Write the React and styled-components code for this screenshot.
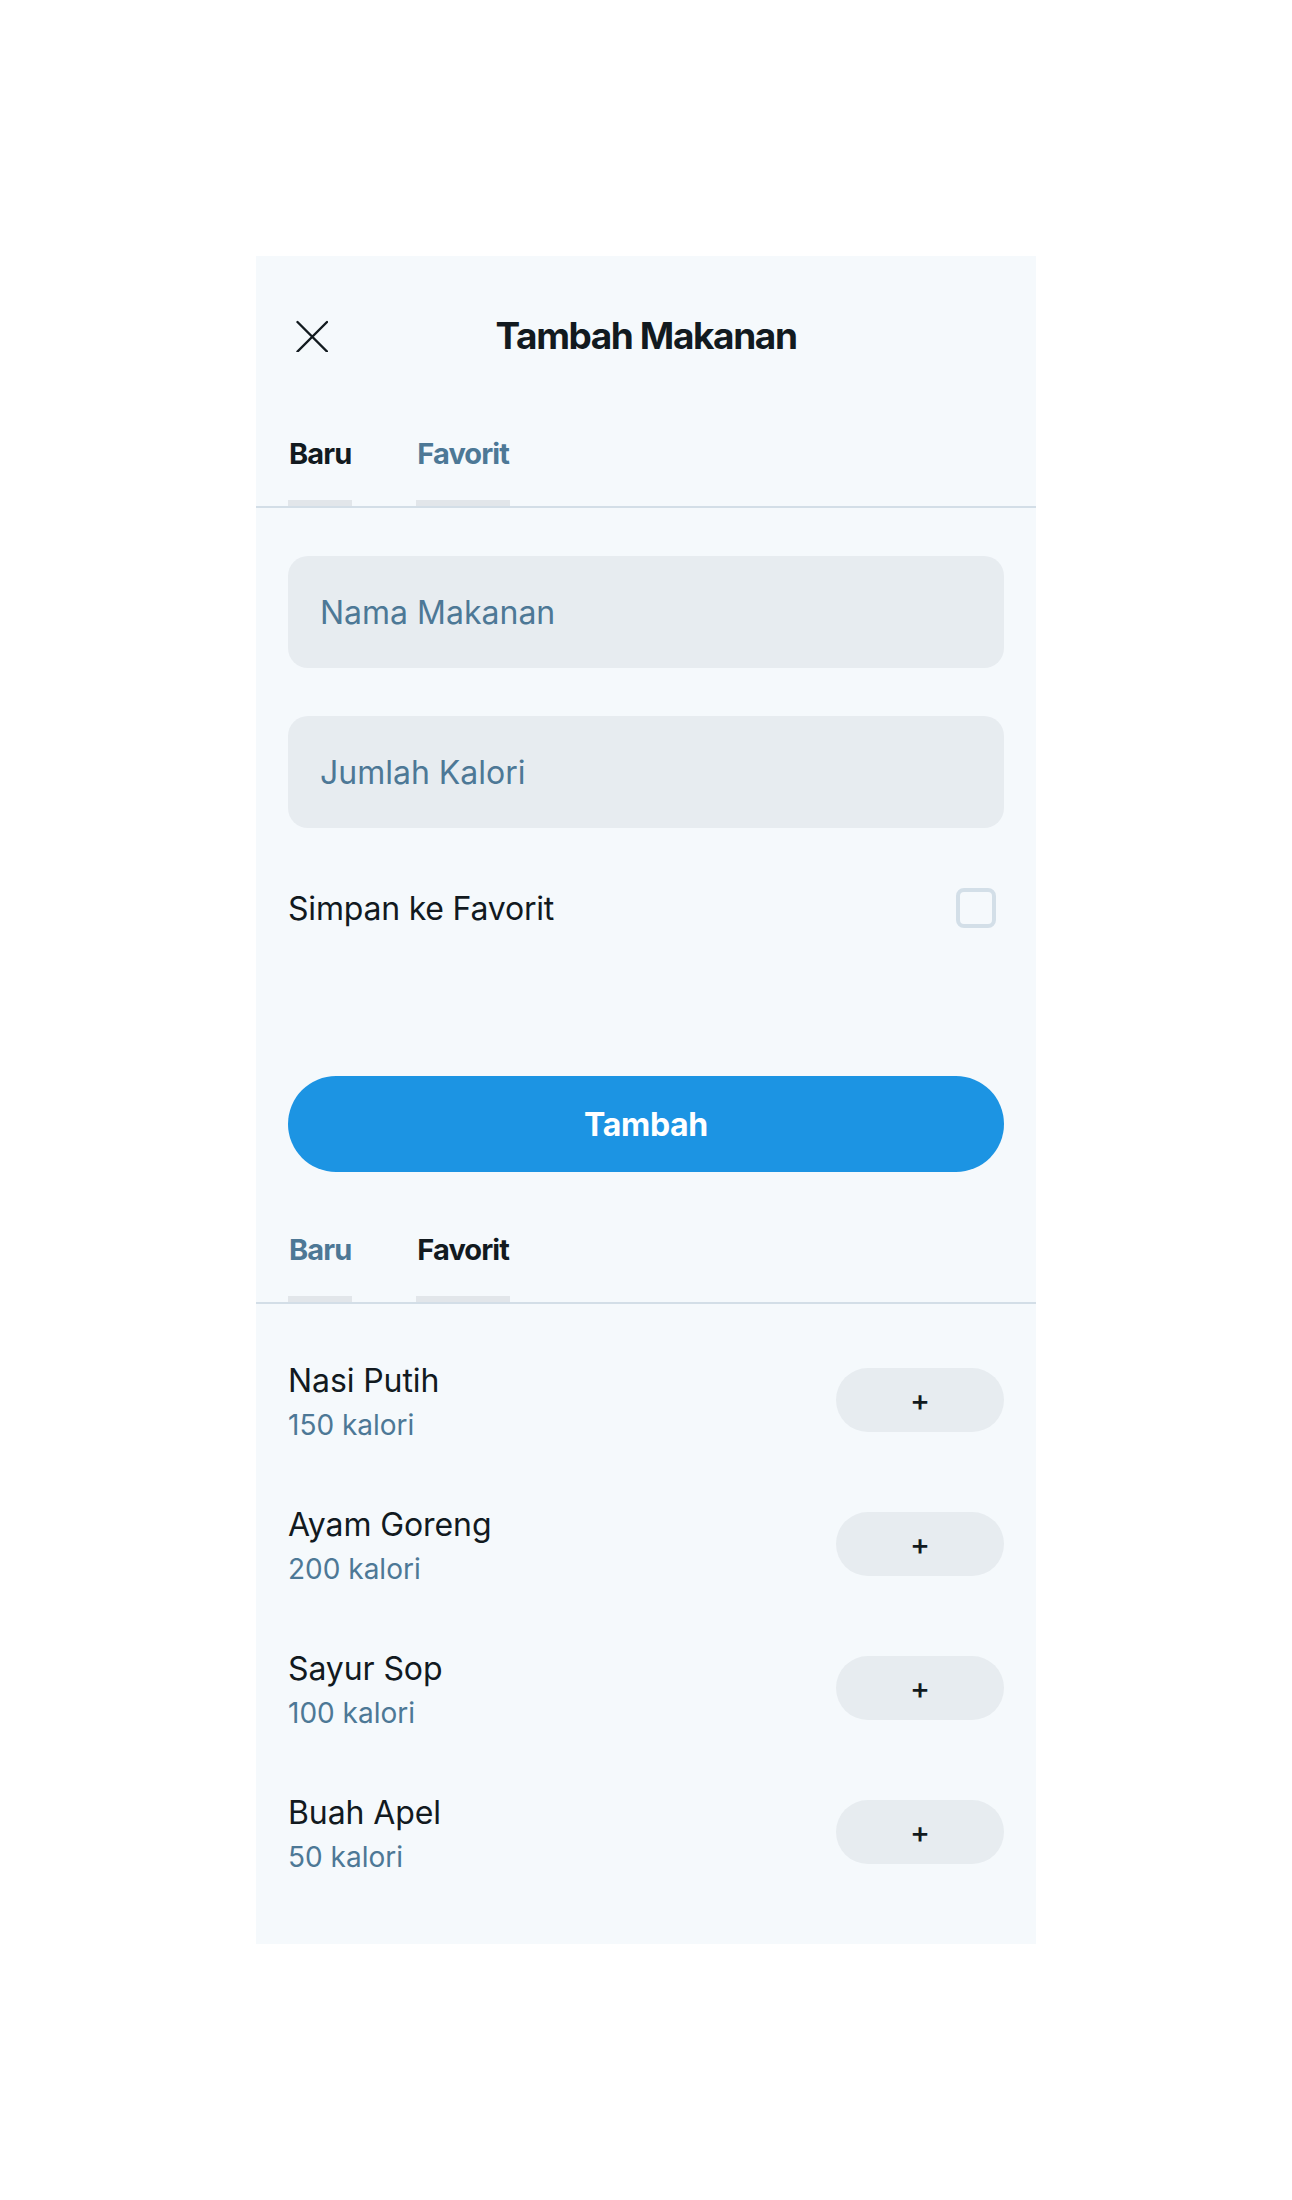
import React, { useState } from "react";
import styled, { createGlobalStyle } from "styled-components";

const GlobalStyle = createGlobalStyle`
  * { box-sizing: border-box; }
  html, body { margin: 0; padding: 0; background: #ffffff; }
  body { font-family: Inter, "Noto Sans", sans-serif; color: #121a1f; }
`;

const Page = styled.div`
  display: flex;
  justify-content: center;
  padding-top: 256px;
  padding-bottom: 256px;
`;

const Card = styled.div`
  width: 780px;
  background: #f5f9fc;
  padding-bottom: 40px;
`;

const Header = styled.div`
  display: grid;
  grid-template-columns: 1fr auto 1fr;
  align-items: center;
  height: 80px;
  margin-top: 40px;
  padding: 0 40px;
`;

const CloseButton = styled.button`
  width: 32px;
  height: 32px;
  padding: 0;
  border: 0;
  background: transparent;
  display: flex;
  align-items: center;
  justify-content: center;
  cursor: pointer;
  justify-self: start;
`;

const Title = styled.h1`
  margin: 0;
  font-size: 37px;
  line-height: 48px;
  font-weight: 700;
  letter-spacing: -1.4px;
  color: #121a1f;
  text-align: center;
`;

const TabList = styled.div`
  display: flex;
  gap: 64px;
  padding: 0 32px;
  margin-top: 60px;
  border-bottom: 2px solid #d3dee7;
`;

const Tab = styled.button`
  background: transparent;
  border: 0;
  border-bottom: 6px solid #e2e6ea;
  padding: 0 1px 28px;
  font-family: inherit;
  font-size: 29px;
  line-height: 36px;
  font-weight: 700;
  letter-spacing: -0.9px;
  color: ${(p) => (p.$active ? "#121a1f" : "#4d7896")};
  cursor: pointer;
`;

const Form = styled.div`
  display: flex;
  flex-direction: column;
  padding: 48px 32px 0;
`;

const Input = styled.input`
  height: 112px;
  width: 100%;
  border: 0;
  border-radius: 20px;
  background: #e7ecf0;
  padding: 0 32px;
  font-family: inherit;
  font-size: 32px;
  color: #121a1f;
  outline: none;
  & + & { margin-top: 48px; }
  &::placeholder { color: #4d7896; opacity: 1; }
`;

const CheckRow = styled.label`
  display: flex;
  align-items: center;
  justify-content: space-between;
  margin-top: 60px;
  height: 40px;
  padding-right: 8px;
`;

const CheckLabel = styled.span`
  font-size: 32px;
  line-height: 40px;
  letter-spacing: -0.2px;
  color: #121a1f;
  padding-top: 2px;
`;

const CheckBox = styled.input`
  appearance: none;
  margin: 0;
  width: 40px;
  height: 40px;
  border: 4px solid #d3dfe8;
  border-radius: 8px;
  background: transparent;
`;

const SubmitButton = styled.button`
  margin-top: 148px;
  height: 96px;
  width: 100%;
  border: 0;
  border-radius: 48px;
  background: #1c94e3;
  color: #ffffff;
  font-family: inherit;
  font-size: 32px;
  font-weight: 700;
  letter-spacing: -0.3px;
  cursor: pointer;
`;

const List = styled.div`
  padding: 24px 32px 0;
`;

const Row = styled.div`
  height: 144px;
  display: flex;
  align-items: center;
  justify-content: space-between;
`;

const ItemText = styled.div`
  display: flex;
  flex-direction: column;
  padding-top: 6px;
`;

const ItemName = styled.span`
  font-size: 32px;
  line-height: 44px;
  letter-spacing: -0.1px;
  color: #121a1f;
`;

const ItemCal = styled.span`
  font-size: 28px;
  line-height: 44px;
  letter-spacing: 0px;
  color: #4d7896;
`;

const AddButton = styled.button`
  width: 168px;
  height: 64px;
  border: 0;
  border-radius: 32px;
  background: #e7ecf0;
  color: #121a1f;
  font-family: inherit;
  font-size: 30px;
  font-weight: 500;
  line-height: 1;
  cursor: pointer;
`;

const CloseIcon = () => (
  <svg width="32" height="32" viewBox="0 0 32 32" fill="none">
    <path d="M1.5 2 L31 31.5 M31 2 L1.5 31.5" stroke="#121a1f" strokeWidth="2.4" strokeLinecap="round" />
  </svg>
);

const foods = [
  { name: "Nasi Putih", cal: 150 },
  { name: "Ayam Goreng", cal: 200 },
  { name: "Sayur Sop", cal: 100 },
  { name: "Buah Apel", cal: 50 },
];

export default function App() {
  const [fav, setFav] = useState(false);
  return (
    <>
      <GlobalStyle />
      <Page>
        <Card>
          <Header>
            <CloseButton aria-label="Tutup">
              <CloseIcon />
            </CloseButton>
            <Title>Tambah Makanan</Title>
            <div />
          </Header>
          <TabList>
            <Tab $active>Baru</Tab>
            <Tab>Favorit</Tab>
          </TabList>
          <Form>
            <Input placeholder="Nama Makanan" />
            <Input placeholder="Jumlah Kalori" />
            <CheckRow>
              <CheckLabel>Simpan ke Favorit</CheckLabel>
              <CheckBox type="checkbox" checked={fav} onChange={(e) => setFav(e.target.checked)} />
            </CheckRow>
            <SubmitButton>Tambah</SubmitButton>
          </Form>
          <TabList>
            <Tab>Baru</Tab>
            <Tab $active>Favorit</Tab>
          </TabList>
          <List>
            {foods.map((f) => (
              <Row key={f.name}>
                <ItemText>
                  <ItemName>{f.name}</ItemName>
                  <ItemCal>{f.cal} kalori</ItemCal>
                </ItemText>
                <AddButton>+</AddButton>
              </Row>
            ))}
          </List>
        </Card>
      </Page>
    </>
  );
}
